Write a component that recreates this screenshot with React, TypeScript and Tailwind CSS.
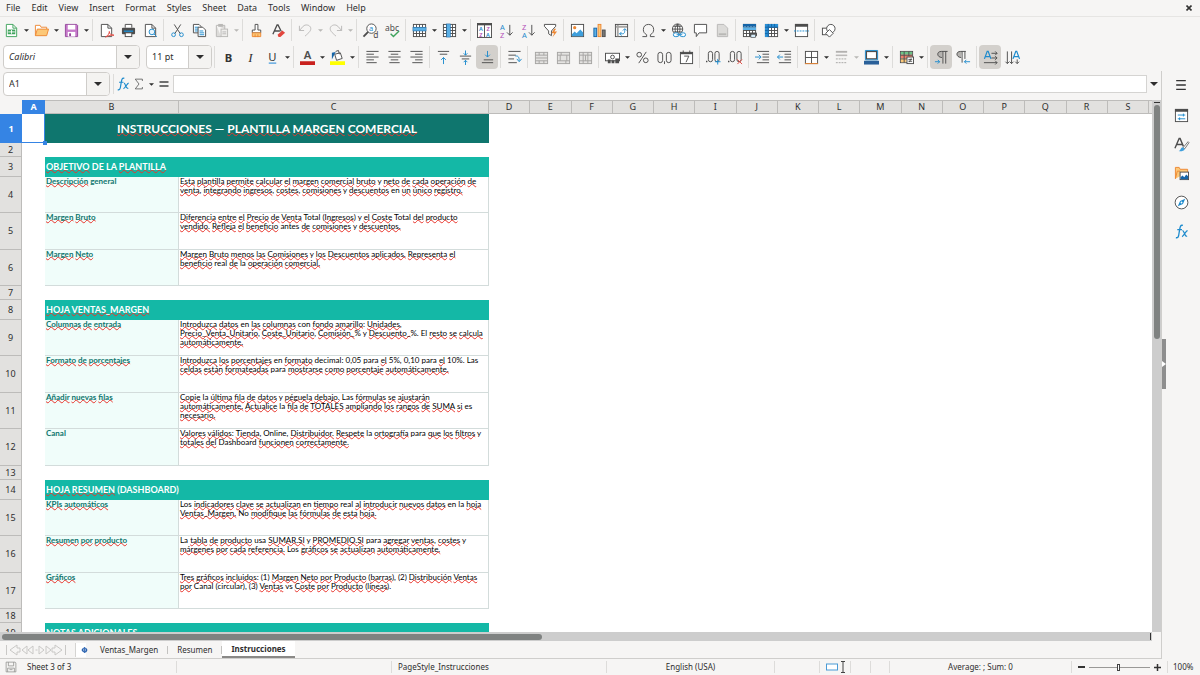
import React from 'react';

const INK = '#4d4d4d';
const BLUE = '#1e8bcd';
const ORANGE = '#ed8733';
const PURPLE = '#b34fb8';
const GREEN = '#3fa35c';
const GREY = '#b9b8b6';

/* ---------- icons (16x16 grid) ---------- */

const lines = (d: string, color = INK) => <path d={d} stroke={color} fill="none" />;

const grid = (
  <>
    <rect x="1.5" y="1.5" width="13" height="13" fill="#fff" stroke={INK} />
    {lines('M1.5 4.8h13M1.5 8h13M1.5 11.2h13M4.8 1.5v13M8 1.5v13M11.2 1.5v13')}
  </>
);

const mergeBox = (inner: string) => (
  <>
    <rect x="1.5" y="2.5" width="13" height="12" fill="#e4e3e1" stroke="#a5a4a2" />
    {lines(inner, '#a5a4a2')}
  </>
);

const icons: Record<string, React.ReactNode> = {
  new: (
    <>
      <path d="M2.5 1.5h7l4 4v9h-11z" fill="#fff" stroke={GREEN} />
      <path d="M9.5 1.5v4h4" fill="none" stroke={GREEN} />
      <rect x="4" y="7" width="8" height="5" fill={GREEN} />
      {lines('M4.5 9.5h7M8 7.5v4', '#fff')}
    </>
  ),
  open: (
    <>
      <path d="M1.5 13.5v-11h5l1 2h6v3" fill="#fff" stroke={ORANGE} />
      <path d="M1.5 13.5l2-7h12l-2 7z" fill="#fcc878" stroke={ORANGE} />
    </>
  ),
  save: (
    <>
      <path d="M1.5 1.5h12l1 1v12h-13z" fill="#c678ca" stroke="#93489b" />
      <rect x="4" y="2" width="8" height="5" fill="#fff" />
      <rect x="4" y="9.5" width="8" height="5" fill="#fff" />
      <rect x="5.5" y="11" width="2" height="3" fill="#93489b" />
    </>
  ),
  pdf: (
    <>
      <path d="M2.5 14.5v-13h7l4 4v9z" fill="#fff" stroke={INK} />
      {lines('M9.5 1.5v4h4')}
      <path d="M7 15c3-2 4-4 4-6 0 3 2 4 5 4-3-.5-6 .5-9 2z" fill="#fff" stroke="#e2463e" />
    </>
  ),
  print: (
    <>
      <path d="M4.5 5v-3.500h7v3.500" fill="#fff" stroke={INK} />
      <rect x="1" y="5" width="14" height="7" rx="1" fill={INK} />
      <rect x="3" y="8" width="10" height="1.500" fill={BLUE} />
      <rect x="4.500" y="10.500" width="7" height="4" fill="#fff" stroke={INK} />
    </>
  ),
  preview: (
    <>
      <path d="M2.5 14.5v-13h7l4 4v9z" fill="#fff" stroke={INK} />
      {lines('M9.5 1.5v4h4')}
      <circle cx="9.5" cy="9.5" r="3" fill="#eaf5fc" stroke={BLUE} />
      {lines('M11.800 11.800l3 3', BLUE)}
    </>
  ),
  cut: (
    <>
      {lines('M4.500 1.500l6.500 10M11.500 1.500L5 11.500')}
      <circle cx="3.800" cy="12.500" r="2" fill="none" stroke={BLUE} />
      <circle cx="12.200" cy="12.500" r="2" fill="none" stroke={BLUE} />
    </>
  ),
  copy: (
    <>
      <path d="M1.500 1.500h6l2 2v7h-8z" fill="#fff" stroke={INK} />
      {lines('M3 4.500h4M3 6.500h5M3 8.500h5', BLUE)}
      <path d="M6.500 4.500h5l3 3v7h-8z" fill="#fff" stroke={INK} />
      {lines('M8 8.500h4M8 10.500h5M8 12.500h5', BLUE)}
    </>
  ),
  paste: (
    <>
      <path d="M2.500 2.500h9v4M2.500 2.500v12h5" fill="#dcdbd9" stroke={GREY} />
      <rect x="4.500" y="1" width="5" height="3" fill={GREY} />
      <rect x="7.500" y="6.500" width="7" height="8" fill="#efeeec" stroke={GREY} />
      {lines('M9 9.500h4M9 11.500h4', GREY)}
    </>
  ),
  clone: (
    <>
      <path d="M6.500 1.500h3v6h3v3h-9v-3h3z" fill="#fff" stroke={INK} />
      <path d="M3.500 10.500h9v4h-9z" fill="#fcc878" stroke={ORANGE} />
      {lines('M6.500 12v3M9.500 12v3', ORANGE)}
    </>
  ),
  clear: (
    <>
      <path d="M2 12L6.500 2h1L11 9M3.500 8.500h6" fill="none" stroke={INK} strokeWidth="1.400" />
      <path d="M7 12.500l5-4.500 3 2.500-5 4.500h-2z" fill="#e2463e" />
    </>
  ),
  undo: lines('M1.500 3v5h5M1.500 8l4-4.500c2.500-2.500 7-1.500 8 1.500 .8 3-1.500 5-6 9', GREY),
  redo: lines('M14.500 3v5h-5M14.500 8l-4-4.500c-2.500-2.500-7-1.500-8 1.500-.8 3 1.500 5 6 9', GREY),
  find: (
    <>
      <circle cx="9" cy="6" r="5" fill="#fff" stroke={INK} />
      <path d="M5.500 9.500l-5 5" stroke={INK} strokeWidth="2" />
      <text x="6.500" y="8.500" fontSize="8" fill={BLUE}>a</text>
      <text x="11" y="15.500" fontSize="9" fill={INK}>d</text>
    </>
  ),
  spell: (
    <>
      <text x="0" y="8" fontSize="9" fill={INK}>abc</text>
      <path d="M6 11.500l3 3 6-6" fill="none" stroke={GREEN} strokeWidth="1.500" />
    </>
  ),
  row: (
    <>
      {grid}
      <rect x="1" y="4.500" width="14" height="4" fill="#5bb0e6" stroke="#1565a8" strokeWidth=".5" />
    </>
  ),
  column: (
    <>
      {grid}
      <rect x="5" y="1" width="4" height="14" fill="#5bb0e6" stroke="#1565a8" strokeWidth=".5" />
    </>
  ),
  sort: (
    <>
      <rect x=".5" y=".5" width="15" height="15" fill="#fff" stroke={INK} />
      <path d="M0 1.500h16" stroke={INK} strokeWidth="2" />
      {lines('M8 1v14')}
      <text x="2" y="8.500" fontSize="6" fontWeight="600" fill={BLUE}>A</text>
      <text x="2.500" y="14.500" fontSize="6" fontWeight="600" fill={PURPLE}>Z</text>
      <text x="10" y="8.500" fontSize="6" fontWeight="600" fill={PURPLE}>Z</text>
      <text x="9.500" y="14.500" fontSize="6" fontWeight="600" fill={BLUE}>A</text>
    </>
  ),
  sortAsc: (
    <>
      <text x="1" y="7" fontSize="8" fill={BLUE}>A</text>
      <text x="1" y="15.500" fontSize="8" fill={PURPLE}>Z</text>
      {lines('M11.500 2v11M8.500 10l3 3 3-3')}
    </>
  ),
  sortDesc: (
    <>
      <text x="1" y="7" fontSize="8" fill={PURPLE}>Z</text>
      <text x="1" y="15.500" fontSize="8" fill={BLUE}>A</text>
      {lines('M11.500 2v11M8.500 10l3 3 3-3')}
    </>
  ),
  filter: (
    <>
      <path d="M1.500 1.500h12v2l-4.500 5v5l-3-2v-3l-4.500-5z" fill="#fff" stroke={INK} />
      <path d="M12 6l-3 5h3l-2 4.500 5-6.500h-3l2-3z" fill={ORANGE} />
    </>
  ),
  image: (
    <>
      <rect x="1.500" y="1.500" width="13" height="13" fill="#fff" stroke={INK} />
      <circle cx="5" cy="5" r="1.700" fill={ORANGE} />
      <path d="M2 14v-2l3-3 2 2 4-4 3 3v4z" fill="#3f9fdc" />
    </>
  ),
  chart: (
    <>
      <rect x="2" y="5.500" width="3" height="9" fill="#5bb0e6" stroke="#1565a8" />
      <rect x="6.500" y="1.500" width="3" height="13" fill="#fcc878" stroke={ORANGE} />
      <rect x="11" y="7.500" width="3" height="7" fill="#797774" stroke={INK} />
    </>
  ),
  pivot: (
    <>
      <rect x="1.500" y="1.500" width="13" height="13" fill="#fff" stroke={INK} />
      <path d="M2 4h12M4 2v12" stroke="#a8a7a5" strokeWidth="2" />
      {lines('M6 11.500h3c2 0 2.500-1 2.500-5M8 9.500l-2 2 2 2M9.500 8l2-2 2 2', BLUE)}
    </>
  ),
  omega: (
    <path
      d="M1.500 14.500H6v-2C3.500 11 2.500 9.500 2.500 7c0-3.500 2.300-5.500 5.500-5.500s5.500 2 5.500 5.500c0 2.500-1 4-3.500 5.500v2h4.500"
      fill="none"
      stroke={INK}
    />
  ),
  link: (
    <>
      <circle cx="7" cy="6.500" r="5.500" fill="#fff" stroke={INK} />
      {lines('M1.500 6.500h11M7 1v11M2.500 3.500h9M2.500 9.500h9M7 1c-3.500 3-3.500 8 0 11M7 1c3.500 3 3.500 8 0 11')}
      <rect x="2.500" y="10.500" width="6" height="4" rx="2" fill="#fff" stroke={BLUE} />
      <rect x="9.500" y="10.500" width="6" height="4" rx="2" fill="#fff" stroke={BLUE} />
      {lines('M6 12.500h6', BLUE)}
    </>
  ),
  comment: <path d="M1.500 1.500h13v9h-8l-3 4v-4h-2z" fill="#fff" stroke={INK} />,
  footer: (
    <>
      <path d="M2.500 1.500h7l4 4v9h-11z" fill="#dcdbd9" stroke={GREY} />
      <rect x="4" y="11" width="8" height="2" fill={GREY} />
    </>
  ),
  printArea: (
    <>
      {grid}
      <path d="M1 1h14v3H1z" fill="#1565a8" />
      <path d="M1 4.500h14v3H1z" fill="#5bb0e6" />
      <rect x="8" y="10" width="8" height="4" rx="1" fill={INK} />
      <rect x="9.500" y="12" width="5" height="3.500" fill="#d5ecfa" stroke={INK} strokeWidth=".7" />
    </>
  ),
  freeze: (
    <>
      {grid}
      <path d="M1 1h14v3.500H5V15H1z" fill="#2a8fd4" />
      {lines('M4.500 1v14M1 4.500h14M8 1v3M11.200 1v3M1 8h3M1 11.200h3', '#1565a8')}
    </>
  ),
  split: (
    <>
      <rect x="1.500" y="1.500" width="13" height="13" fill="#fff" stroke={INK} />
      <path d="M1 2.500h14" stroke={INK} strokeWidth="3" />
      <path d="M0 8.500h16" stroke={BLUE} strokeDasharray="2 1" />
    </>
  ),
  shapes: (
    <>
      <rect x="1.500" y="5.500" width="7" height="7" fill="#fff" stroke={INK} />
      <circle cx="10.500" cy="6" r="4.500" fill="#fff" stroke={INK} />
      <path d="M9 7l4 4-4 4-4-4z" fill="#fff" stroke={INK} />
    </>
  ),
  bold: <text x="4" y="12.500" fontSize="12" fontWeight="700" fill="#333">B</text>,
  italic: (
    <text x="5.500" y="12.500" fontSize="14" fontStyle="italic" fill="#333" style={{ fontFamily: 'Liberation Serif, serif' }}>
      I
    </text>
  ),
  underline: (
    <>
      <text x="3.500" y="11.500" fontSize="12" fill="#333">U</text>
      <path d="M4 14h8" stroke="#5aa5e0" strokeWidth="1.500" />
    </>
  ),
  fontColor: (
    <>
      <text x="4" y="10" fontSize="12" fontWeight="600" fill={INK}>A</text>
      <rect x="0" y="12" width="16" height="4" fill="#c9211e" />
    </>
  ),
  fill: (
    <>
      <path d="M5 4.500l6-1.500 2 6-6 2z" fill="#fff" stroke={INK} />
      <path d="M6 1.500l3-1 1 4" fill="none" stroke={INK} />
      <path d="M2 10V3l4-1-1.500 3z" fill="#1565a8" />
      <rect x="0" y="12" width="16" height="4" fill="#ffff00" />
    </>
  ),
  alignLeft: lines('M1.500 1.500h13M1.500 4.500h8M1.500 7.500h13M1.500 10.500h8M1.500 13.500h11'),
  alignCenter: lines('M1.500 1.500h13M4 4.500h8M1.500 7.500h13M4 10.500h8M2.500 13.500h11'),
  alignRight: lines('M1.500 1.500h13M6.500 4.500h8M1.500 7.500h13M6.500 10.500h8M3.500 13.500h11'),
  alignTop: (
    <>
      {lines('M2 1.500h12M4 4.500h8')}
      {lines('M8 15V8M5.500 10.500L8 8l2.500 2.500', BLUE)}
    </>
  ),
  alignMiddle: (
    <>
      {lines('M2 6.500h12M4 9.500h8')}
      {lines('M8 .5v5M6 3.500l2 2 2-2M8 16v-5M6 13l2-2 2 2', BLUE)}
    </>
  ),
  alignBottom: (
    <>
      {lines('M4 10.500h10M2 13.500h12')}
      {lines('M8 1v6.500M5.500 5L8 7.500 10.500 5', BLUE)}
    </>
  ),
  wrap: (
    <>
      {lines('M1.500 1.500h13M1.500 5.500h8M1.500 9.500h6M1.500 13.500h9')}
      {lines('M9 6.500c3-.5 4 1 4 5M10.500 9.500l2.500 3 2.500-3', BLUE)}
    </>
  ),
  mergeAll: mergeBox('M1.500 5.500h13M1.500 11.500h13M5.500 2.500v3M10.500 2.500v3M5.500 11.500v3M10.500 11.500v3M1.500 8.500h13'),
  merge: mergeBox('M1.500 5.500h13M1.500 11.500h13M5.500 2.500v3M10.500 11.500v3M4.500 5.500v6M11.500 5.500v6'),
  unmerge: mergeBox('M1.500 5.500h13M1.500 11.500h13M5.500 2.500v12M10.500 2.500v12M8 5.500v6'),
  currency: (
    <>
      <rect x=".5" y="3.500" width="15" height="8" fill="#fff" stroke={INK} />
      <circle cx="8" cy="7.500" r="2" fill="none" stroke={INK} />
      <path d="M3 10h3v4H3zM7 11h3v3H7zM11 9h4v5h-4z" fill={INK} />
    </>
  ),
  percent: (
    <>
      <circle cx="4.500" cy="5" r="2.500" fill="none" stroke={INK} />
      <circle cx="11.500" cy="11" r="2.500" fill="none" stroke={INK} />
      {lines('M12 2L4 14')}
    </>
  ),
  number: (
    <>
      <rect x="1" y="2.500" width="5" height="11" rx="2.500" fill="none" stroke={INK} />
      <rect x="10" y="2.500" width="5" height="11" rx="2.500" fill="none" stroke={INK} />
      {lines('M8 12v3')}
    </>
  ),
  date: (
    <>
      <rect x="1.500" y="2.500" width="13" height="12" fill="#fff" stroke={INK} />
      <path d="M1.500 3.500h13" stroke={INK} strokeWidth="2" />
      {lines('M4.500 .5v3M11.500 .5v3M5.500 6.500h5l-3 6.500')}
    </>
  ),
  addDecimal: (
    <>
      <rect x="2.500" y="1.500" width="4.500" height="11" rx="2.200" fill="none" stroke={INK} />
      <rect x="9.500" y="1.500" width="4.500" height="11" rx="2.200" fill="none" stroke={INK} />
      <path d="M0 11.500h1.500v1.500H0z" fill={INK} />
      {lines('M12.500 9.500v6M9.500 12.500h6', BLUE)}
    </>
  ),
  delDecimal: (
    <>
      <rect x="2.500" y="1.500" width="4.500" height="11" rx="2.200" fill="none" stroke={INK} />
      <rect x="9.500" y="1.500" width="4.500" height="11" rx="2.200" fill="none" stroke={INK} />
      <path d="M0 11.500h1.500v1.500H0z" fill={INK} />
      {lines('M10 10l5 5M15 10l-5 5', '#e2463e')}
    </>
  ),
  indent: (
    <>
      {lines('M2 1.500h13M8 4.500h7M8 7.500h7M8 10.500h7M2 13.500h13')}
      {lines('M0 7.500h6M4 5l2.500 2.500L4 10', BLUE)}
    </>
  ),
  outdent: (
    <>
      {lines('M2 1.500h13M8 4.500h7M8 7.500h7M8 10.500h7M2 13.500h13')}
      {lines('M.5 7.500h6M3 5L.5 7.500 3 10', BLUE)}
    </>
  ),
  borders: (
    <>
      <rect x="1.500" y="1.500" width="13" height="13" fill="#fff" stroke={INK} />
      {lines('M8 1.500v13M1.500 8h13')}
      {lines('M1 14.500h14', ORANGE)}
    </>
  ),
  borderStyle: (
    <>
      {lines('M2 1.500h12M2 5.500h12', '#a5a4a2')}
      <path d="M2 2.500h12M2 6h12" stroke={GREY} />
      <path d="M2 9.500h12M2 13.500h12" stroke="#a5a4a2" strokeDasharray="2 1" />
    </>
  ),
  borderColor: (
    <>
      <rect x="2.500" y="1.500" width="11" height="8" fill="#fff" stroke={INK} strokeWidth="1.500" />
      <path d="M1.500 .5h13v10h-13z" fill="none" stroke={BLUE} />
      <rect x="0" y="11.500" width="16" height="4" fill="#2a6099" />
    </>
  ),
  conditional: (
    <>
      <rect x="1.500" y="1.500" width="13" height="12" fill="#fff" stroke={INK} />
      <path d="M2 2h12v3H2z" fill="#6cc487" />
      <path d="M2 5h12v4H2z" fill="#f0806c" />
      <path d="M2 9h6v4H2z" fill="#fcc878" />
      {lines('M1.500 5.500h13M1.500 9.500h7M5.500 1.500v12M10.500 1.500v5')}
      <rect x="8.500" y="7.500" width="7" height="7" fill="#fff" stroke={INK} />
      {lines('M10 10h4M10 12h4M13 9l-2 4')}
    </>
  ),
  ltr: (
    <>
      <path d="M9 1.500C5 1 4 3 4 4.500S5.500 8 8 8z" fill="#b4b2af" />
      {lines('M14.500 1.500H8C5 1.500 4 3 4 4.500S5.500 8 8.500 8M9.500 1.500v13M12.500 1.500v13')}
      {lines('M1 12.500h5M4 10.500l2 2-2 2', BLUE)}
    </>
  ),
  rtl: (
    <>
      <path d="M6 1.500C2 1 1 3 1 4.500S2.500 8 5 8z" fill="#b4b2af" />
      {lines('M10.500 1.500H5C2 1.500 1 3 1 4.500S2.500 8 5.500 8M6.500 1.500v12M9.500 1.500v8')}
      {lines('M9 12.500h6M11 10.500l-2 2 2 2', BLUE)}
    </>
  ),
  textLtr: (
    <>
      <path d="M1.500 9.500l3-8h1l3 8M2.500 7h5" fill="none" stroke={BLUE} strokeWidth="1.300" />
      {lines('M9 3.500h6M13 1.500l2 2-2 2M9 8.500h6M13 6.500l2 2-2 2M1 13.500h14M13 11.500l2 2-2 2')}
    </>
  ),
  textTtb: (
    <>
      <path d="M8.500 9.500l3-8h1l3 8M9.500 7h5" fill="none" stroke={BLUE} strokeWidth="1.300" />
      {lines('M2.500 1.500v13M.5 12.500l2 2 2-2M7 1.500v13M5 12.500l2 2 2-2M13 10v4.500M11 12.500l2 2 2-2')}
    </>
  ),
  properties: (
    <>
      <rect x="1.500" y="1.500" width="13" height="13" fill="#fff" stroke={INK} />
      <path d="M1 2.500h14" stroke={INK} strokeWidth="3" />
      {lines('M4 7.500h8M10 6v3M4 11.500h8M6 10v3', BLUE)}
    </>
  ),
  styles: (
    <>
      <path d="M1 12L5.500 1.500h1L10 10M2.500 8h7" fill="none" stroke={INK} strokeWidth="1.500" />
      <path d="M15 5l-5 6 1.500 1.500L16 6z" fill="#fff" stroke={INK} strokeWidth=".8" />
      <path d="M5 15c2 0 2-4 4.500-4l2 2c-1 2-4 2.500-6.500 2z" fill="#3f9fdc" />
    </>
  ),
  gallery: (
    <>
      <path d="M1.500 13.500v-12h4l1 2h8v3" fill="#fcc878" stroke={ORANGE} />
      {lines('M1.500 13.500l2-8h3', ORANGE)}
      <rect x="6.500" y="6.500" width="9" height="8" fill="#fff" stroke={INK} />
      <path d="M7 14v-2l2-2 2 2 2-3 2 2v3z" fill="#1565a8" />
    </>
  ),
  navigator: (
    <>
      <circle cx="8" cy="8" r="6.800" fill="#fff" stroke={INK} />
      <path d="M12 4l-2.500 5.500L4 12l2.500-5.500z" fill={BLUE} />
      <circle cx="8" cy="8" r="1" fill="#fff" />
    </>
  ),
  functions: (
    <>
      <path d="M9.500 1.500C7 .5 6.500 3 6 6l-1 6c-.5 2.500-1.500 3-3 2.500M3.500 6h5" fill="none" stroke={BLUE} strokeWidth="1.400" />
      <path d="M9 7c2-.5 2 7 5 6M14.500 7c-2 0-4 6-6 6.500" fill="none" stroke={BLUE} strokeWidth="1.300" />
    </>
  ),
  menu: <path d="M2.500 3h11M2.500 8h11M2.500 13h11" stroke="#333" strokeWidth="1.500" />,
  sum: lines('M12.500 4V1.500H3L8 8l-5 6.500h9.500V12'),
  equals: <path d="M3.500 6h9M3.500 10h9" stroke="#444" strokeWidth="1.500" />,
  disk: (
    <>
      <path d="M1.500 1.500h12l1 1v12h-13z" fill="none" stroke="#8e8d8b" />
      {lines('M4.500 1.500v5h7v-5M3.500 14.500v-5h9v5M6 11.500h4', '#8e8d8b')}
    </>
  ),
};

const Icon: React.FC<{ name: string; className?: string }> = ({ name, className = 'size-4' }) => (
  <svg viewBox="0 0 16 16" className={`${className} flex-shrink-0 overflow-visible`} aria-hidden="true">
    {icons[name]}
  </svg>
);

const Caret: React.FC<{ big?: boolean; muted?: boolean }> = ({ big, muted }) => (
  <svg viewBox="0 0 8 4" className={big ? 'h-1 w-2' : 'h-[3px] w-[5px]'} aria-hidden="true">
    <path d="M0 0h8L4 4z" fill={muted ? '#b9b8b6' : '#2e2e2e'} />
  </svg>
);

/* ---------- toolbars ---------- */

interface Tool {
  icon: string;
  label: string;
  menu?: boolean;
  active?: boolean;
  disabled?: boolean;
}

const standardGroups: Tool[][] = [
  [
    { icon: 'new', label: 'New', menu: true },
    { icon: 'open', label: 'Open', menu: true },
    { icon: 'save', label: 'Save', menu: true },
  ],
  [
    { icon: 'pdf', label: 'Export as PDF' },
    { icon: 'print', label: 'Print' },
    { icon: 'preview', label: 'Print preview' },
  ],
  [
    { icon: 'cut', label: 'Cut' },
    { icon: 'copy', label: 'Copy' },
    { icon: 'paste', label: 'Paste', menu: true, disabled: true },
  ],
  [
    { icon: 'clone', label: 'Clone formatting' },
    { icon: 'clear', label: 'Clear formatting' },
  ],
  [
    { icon: 'undo', label: 'Undo', menu: true, disabled: true },
    { icon: 'redo', label: 'Redo', menu: true, disabled: true },
  ],
  [
    { icon: 'find', label: 'Find and replace' },
    { icon: 'spell', label: 'Spelling' },
  ],
  [
    { icon: 'row', label: 'Row', menu: true },
    { icon: 'column', label: 'Column', menu: true },
  ],
  [
    { icon: 'sort', label: 'Sort' },
    { icon: 'sortAsc', label: 'Sort ascending' },
    { icon: 'sortDesc', label: 'Sort descending' },
    { icon: 'filter', label: 'AutoFilter' },
  ],
  [
    { icon: 'image', label: 'Insert image' },
    { icon: 'chart', label: 'Insert chart' },
    { icon: 'pivot', label: 'Insert pivot table' },
  ],
  [
    { icon: 'omega', label: 'Special character', menu: true },
    { icon: 'link', label: 'Hyperlink' },
    { icon: 'comment', label: 'Comment' },
    { icon: 'footer', label: 'Headers and footers', disabled: true },
  ],
  [
    { icon: 'printArea', label: 'Define print area' },
    { icon: 'freeze', label: 'Freeze rows and columns', menu: true },
    { icon: 'split', label: 'Split window' },
  ],
  [{ icon: 'shapes', label: 'Draw functions' }],
];

const formatGroups: Tool[][] = [
  [
    { icon: 'bold', label: 'Bold' },
    { icon: 'italic', label: 'Italic' },
    { icon: 'underline', label: 'Underline', menu: true },
  ],
  [
    { icon: 'fontColor', label: 'Font color', menu: true },
    { icon: 'fill', label: 'Background color', menu: true },
  ],
  [
    { icon: 'alignLeft', label: 'Align left' },
    { icon: 'alignCenter', label: 'Center horizontally' },
    { icon: 'alignRight', label: 'Align right' },
  ],
  [
    { icon: 'alignTop', label: 'Align top' },
    { icon: 'alignMiddle', label: 'Center vertically' },
    { icon: 'alignBottom', label: 'Align bottom', active: true },
  ],
  [{ icon: 'wrap', label: 'Wrap text' }],
  [
    { icon: 'mergeAll', label: 'Merge and center', disabled: true },
    { icon: 'merge', label: 'Merge cells', disabled: true },
    { icon: 'unmerge', label: 'Unmerge cells', disabled: true },
  ],
  [
    { icon: 'currency', label: 'Format as currency', menu: true },
    { icon: 'percent', label: 'Format as percent' },
    { icon: 'number', label: 'Format as number' },
    { icon: 'date', label: 'Format as date' },
  ],
  [
    { icon: 'addDecimal', label: 'Add decimal place' },
    { icon: 'delDecimal', label: 'Delete decimal place' },
  ],
  [
    { icon: 'indent', label: 'Increase indent' },
    { icon: 'outdent', label: 'Decrease indent' },
  ],
  [
    { icon: 'borders', label: 'Borders', menu: true },
    { icon: 'borderStyle', label: 'Border style', menu: true, disabled: true },
    { icon: 'borderColor', label: 'Border color', menu: true },
  ],
  [{ icon: 'conditional', label: 'Conditional formatting', menu: true }],
  [
    { icon: 'ltr', label: 'Left-to-right', active: true },
    { icon: 'rtl', label: 'Right-to-left' },
  ],
  [
    { icon: 'textLtr', label: 'Text direction left to right', active: true },
    { icon: 'textTtb', label: 'Text direction top to bottom' },
  ],
];

const Separator = () => <div className="mx-0.5 h-[22px] w-px flex-shrink-0 bg-[#dddcda]" />;

const ToolGroups: React.FC<{ groups: Tool[][] }> = ({ groups }) => (
  <>
    {groups.map((group, i) => (
      <React.Fragment key={i}>
        {i > 0 && <Separator />}
        {group.map((tool) => (
          <div key={tool.icon} className="flex flex-shrink-0 items-center">
            <button
              type="button"
              aria-label={tool.label}
              aria-pressed={tool.active}
              disabled={tool.disabled}
              className={`flex h-6 w-[22px] items-center justify-center rounded ${tool.active ? 'bg-[#d3d0cc]' : ''}`}
            >
              <Icon name={tool.icon} className="size-[15px]" />
            </button>
            {tool.menu && (
              <button
                type="button"
                aria-label={`${tool.label} options`}
                disabled={tool.disabled}
                className="flex h-6 w-2 items-center justify-center"
              >
                <Caret muted={tool.disabled} />
              </button>
            )}
          </div>
        ))}
      </React.Fragment>
    ))}
  </>
);

interface ComboProps {
  label: string;
  value: string;
  className: string;
  textClass?: string;
}

const Combo: React.FC<ComboProps> = ({ label, value, className, textClass = '' }) => (
  <div className={`relative flex h-6 flex-shrink-0 overflow-hidden rounded border border-[#cfcdca] bg-white ${className}`}>
    <select aria-label={label} defaultValue={value} className={`w-full appearance-none bg-transparent pl-[5px] outline-none ${textClass}`}>
      <option>{value}</option>
    </select>
    <div className="pointer-events-none absolute inset-y-0 right-0 flex w-[23px] items-center justify-center border-l border-[#cfcdca] bg-[#f4f3f1]">
      <Caret big />
    </div>
  </div>
);

/* ---------- sheet ---------- */

type Row =
  | { kind: 'blank' }
  | { kind: 'title'; text: string }
  | { kind: 'section'; text: string }
  | { kind: 'item'; label: string; text: string; tall?: boolean };

const rows: Row[] = [
  { kind: 'title', text: 'INSTRUCCIONES — PLANTILLA MARGEN COMERCIAL' },
  { kind: 'blank' },
  { kind: 'section', text: 'OBJETIVO DE LA PLANTILLA' },
  {
    kind: 'item',
    label: 'Descripción general',
    text: 'Esta plantilla permite calcular el margen comercial bruto y neto de cada operación de\nventa, integrando ingresos, costes, comisiones y descuentos en un único registro.',
  },
  {
    kind: 'item',
    label: 'Margen Bruto',
    text: 'Diferencia entre el Precio de Venta Total (Ingresos) y el Coste Total del producto\nvendido. Refleja el beneficio antes de comisiones y descuentos.',
    tall: true,
  },
  {
    kind: 'item',
    label: 'Margen Neto',
    text: 'Margen Bruto menos las Comisiones y los Descuentos aplicados. Representa el\nbeneficio real de la operación comercial.',
  },
  { kind: 'blank' },
  { kind: 'section', text: 'HOJA VENTAS_MARGEN' },
  {
    kind: 'item',
    label: 'Columnas de entrada',
    text: 'Introduzca datos en las columnas con fondo amarillo: Unidades,\nPrecio_Venta_Unitario, Coste_Unitario, Comisión_% y Descuento_%. El resto se calcula\nautomáticamente.',
  },
  {
    kind: 'item',
    label: 'Formato de porcentajes',
    text: 'Introduzca los porcentajes en formato decimal: 0,05 para el 5%, 0,10 para el 10%. Las\nceldas están formateadas para mostrarse como porcentaje automáticamente.',
    tall: true,
  },
  {
    kind: 'item',
    label: 'Añadir nuevas filas',
    text: 'Copie la última fila de datos y péguela debajo. Las fórmulas se ajustarán\nautomáticamente. Actualice la fila de TOTALES ampliando los rangos de SUMA si es\nnecesario.',
  },
  {
    kind: 'item',
    label: 'Canal',
    text: 'Valores válidos: Tienda, Online, Distribuidor. Respete la ortografía para que los filtros y\ntotales del Dashboard funcionen correctamente.',
    tall: true,
  },
  { kind: 'blank' },
  { kind: 'section', text: 'HOJA RESUMEN (DASHBOARD)' },
  {
    kind: 'item',
    label: 'KPIs automáticos',
    text: 'Los indicadores clave se actualizan en tiempo real al introducir nuevos datos en la hoja\nVentas_Margen. No modifique las fórmulas de esta hoja.',
  },
  {
    kind: 'item',
    label: 'Resumen por producto',
    text: 'La tabla de producto usa SUMAR.SI y PROMEDIO.SI para agregar ventas, costes y\nmárgenes por cada referencia. Los gráficos se actualizan automáticamente.',
    tall: true,
  },
  {
    kind: 'item',
    label: 'Gráficos',
    text: 'Tres gráficos incluidos: (1) Margen Neto por Producto (barras), (2) Distribución Ventas\npor Canal (circular), (3) Ventas vs Coste por Producto (líneas).',
  },
  { kind: 'blank' },
  { kind: 'section', text: 'NOTAS ADICIONALES' },
];

const columns = ['D', 'E', 'F', 'G', 'H', 'I', 'J', 'K', 'L', 'M', 'N', 'O', 'P', 'Q', 'R', 'S'];

// words the English dictionary accepts
const known = new Set(
  'DE LA La Los Las El No y en con la para real antes decimal general usa es vs Total Online Dashboard DASHBOARD Canal circular'.split(' '),
);

const SpellChecked: React.FC<{ text: string }> = ({ text }) => (
  <>
    {text.split(/([\p{L}_.]*\p{L}[\p{L}_.]*)/u).map((part, i) => {
      if (i % 2 === 0 || known.has(part.replace(/\.$/, ''))) return part;
      return (
        <span key={i} className="underline decoration-[#e8352c] decoration-wavy decoration-1 [text-decoration-skip-ink:none] [text-underline-offset:-1px]">
          {part}
        </span>
      );
    })}
  </>
);

const rowHeight = (row: Row) => {
  if (row.kind === 'title') return 'h-[29px]';
  if (row.kind === 'blank') return 'h-[14px]';
  if (row.kind === 'section') return 'h-5';
  return row.tall ? 'h-[37px]' : 'h-9';
};

const RowCells: React.FC<{ row: Row }> = ({ row }) => {
  switch (row.kind) {
    case 'title':
      return (
        <td colSpan={2} className="bg-[#0f766e] text-center font-[Lato,sans-serif] text-xs font-bold whitespace-nowrap text-white">
          <SpellChecked text={row.text} />
        </td>
      );
    case 'section':
      return (
        <td colSpan={2} className="bg-[#14b8a6] pl-px font-[Lato,sans-serif] text-[9px] leading-3 font-bold whitespace-nowrap text-white">
          <SpellChecked text={row.text} />
        </td>
      );
    case 'item':
      return (
        <>
          <td className="border-r border-b border-[#d3dcdb] bg-[#f0fdfa] pl-px align-top font-[Lato,sans-serif] text-[8px] leading-[9px] font-bold whitespace-nowrap text-[#0f766e]">
            <SpellChecked text={row.label} />
          </td>
          <td className="border-r border-b border-[#d3dcdb] pl-px align-top font-[Lato,sans-serif] text-[8px] leading-[9px] whitespace-pre text-black">
            <SpellChecked text={row.text} />
          </td>
        </>
      );
    default:
      return <td colSpan={2} />;
  }
};

const headCell = 'border-r border-b border-[#bdbcba] bg-[#e2e1df] text-center font-normal leading-3';

const Sheet = () => (
  <table className="w-full table-fixed border-separate border-spacing-0 bg-white">
    <colgroup>
      <col className="w-[22px]" />
      <col className="w-[23px]" />
      <col className="w-[134px]" />
      <col className="w-[310px]" />
      {columns.map((c) => (
        <col key={c} />
      ))}
      <col className="w-[3px]" />
    </colgroup>
    <thead>
      <tr className="h-[14px]">
        <td className="bg-[#f6f5f4]" />
        <th className="bg-[#3584e4] text-center leading-3 font-bold text-white">A</th>
        <th className={`border-t ${headCell}`}>B</th>
        <th className={`border-t ${headCell}`}>C</th>
        {columns.map((c) => (
          <th key={c} className={`border-t ${headCell}`}>
            {c}
          </th>
        ))}
        <td className="border-t border-b border-[#bdbcba] bg-[#e2e1df]" />
      </tr>
    </thead>
    <tbody>
      {rows.map((row, i) => (
        <tr key={i} className={rowHeight(row)}>
          <th className={i === 0 ? 'bg-[#3584e4] text-center leading-3 font-bold text-white' : headCell}>{i + 1}</th>
          <td className="relative">
            {i === 0 && (
              <>
                <div className="absolute inset-0 border-r border-b border-[#3584e4]" />
                <div className="absolute -right-0.5 -bottom-0.5 z-10 size-1 bg-[#3584e4]" />
              </>
            )}
          </td>
          <RowCells row={row} />
          <td colSpan={17} />
        </tr>
      ))}
    </tbody>
  </table>
);

/* ---------- window ---------- */

const menus = ['File', 'Edit', 'View', 'Insert', 'Format', 'Styles', 'Sheet', 'Data', 'Tools', 'Window', 'Help'];

const MenuBar = () => (
  <nav className="flex h-4 flex-shrink-0 items-center pl-1.5">
    {menus.map((m) => (
      <button key={m} type="button" className="mr-[11px]">
        {m}
      </button>
    ))}
    <button type="button" aria-label="Close" className="mr-2 ml-auto">
      <svg viewBox="0 0 6 6" className="size-[6px]" aria-hidden="true">
        <path d="M.5 .5l5 5M5.500 .5l-5 5" stroke="#333" strokeWidth="1.600" />
      </svg>
    </button>
  </nav>
);

const FormulaBar = () => (
  <div className="flex h-[29px] flex-shrink-0 items-start pt-px pl-[3px]">
    <Combo label="Name box" value="A1" className="w-[107px]" />
    <div className="flex h-6 flex-1 items-center">
      <div className="mr-px ml-[3px] h-5 w-px bg-[#dddcda]" />
      <button type="button" aria-label="Function wizard" className="flex w-4 justify-center">
        <Icon name="functions" className="size-3.5" />
      </button>
      <button type="button" aria-label="Select function" className="flex w-4 justify-center">
        <Icon name="sum" className="size-3" />
      </button>
      <button type="button" aria-label="Select function options" className="flex w-2 justify-center">
        <Caret />
      </button>
      <button type="button" aria-label="Formula" className="flex w-[18px] justify-center">
        <Icon name="equals" className="size-4" />
      </button>
      <input aria-label="Input line" className="h-[18px] min-w-0 flex-1 border border-[#d5d4d2] bg-white px-1 outline-none" />
      <button type="button" aria-label="Expand formula bar" className="flex w-[14px] justify-center">
        <Caret big />
      </button>
    </div>
  </div>
);

const SideBar = () => (
  <aside className="relative flex w-[39px] flex-shrink-0 flex-col items-center border-l border-[#cfcecc] pt-[5px]">
    <button type="button" aria-label="Sidebar settings" className="mb-2 flex h-[17px] items-center">
      <Icon name="menu" className="size-3.5" />
    </button>
    {['properties', 'styles', 'gallery', 'navigator', 'functions'].map((name) => (
      <button key={name} type="button" aria-label={name} className="flex h-[29px] items-center">
        <Icon name={name} className="size-[15px]" />
      </button>
    ))}
    <button
      type="button"
      aria-label="Hide sidebar"
      className="absolute top-[268px] left-0 flex h-[50px] w-1 items-center justify-center bg-[#8e8e8e]"
    >
      <svg viewBox="0 0 4 6" className="h-[6px] w-1" aria-hidden="true">
        <path d="M0 0l4 3-4 3z" fill="#fff" />
      </svg>
    </button>
  </aside>
);

const SheetTabs = () => (
  <div className="flex h-[18px] flex-shrink-0 items-stretch border-b border-[#cfcecc] text-[8px]">
    <svg viewBox="0 0 62 14" className="ml-[5px] h-[14px] w-[62px] self-center" aria-hidden="true">
      <path
        d="M1.500 2v10M12 2L5 7l7 5V9h3V5h-3zM17 7l5-4v8zM23 7l5-4v8zM30.500 7h2M39 7l-5-4v8zM46 7l-5-4v8zM50 2l7 5-7 5V9h-3V5h3zM60.500 2v10"
        fill="none"
        stroke="#c9c8c6"
      />
    </svg>
    <button type="button" aria-label="Add sheet" className="ml-2 flex w-4 items-center">
      <svg viewBox="0 0 16 14" className="h-[14px] w-4" aria-hidden="true">
        <path d="M1 0h10v14H1z" fill="#fff" />
        <path d="M.5 0v14" stroke="#d5d4d2" />
        <circle cx="9.500" cy="7" r="2" fill="#fff" stroke="#2a62b0" strokeWidth="1.200" />
        <path d="M9.500 4v6M6.500 7h6" stroke="#2a62b0" strokeWidth=".8" />
      </svg>
    </button>
    <button type="button" className="px-[9px]">
      Ventas_Margen
    </button>
    <div className="h-2 w-px self-center bg-[#c3c2c0]" />
    <button type="button" className="px-[9px]">
      Resumen
    </button>
    <div className="h-2 w-px self-center bg-[#c3c2c0]" />
    <button type="button" className="border-b-2 border-[#8a8987] bg-white px-[9px] font-bold">
      Instrucciones
    </button>
  </div>
);

const statusCell = 'flex items-center border-l border-[#dddcda] h-3 whitespace-nowrap';

const StatusBar = () => (
  <footer className="grid h-4 flex-shrink-0 grid-cols-[22px_154fr_215fr_215fr_168fr_45px_31px_20px_19px_182fr_96px_33px] items-center text-[8px]">
    <Icon name="disk" className="mx-auto size-3" />
    <span className="pl-[5px]">Sheet 3 of 3</span>
    <span className={statusCell} />
    <span className={`${statusCell} pl-1.5`}>PageStyle_Instrucciones</span>
    <span className={`${statusCell} justify-center`}>English (USA)</span>
    <span className={statusCell} />
    <span className={`${statusCell} pl-1.5`}>
      <svg viewBox="0 0 20 12" className="h-3 w-5" aria-hidden="true">
        <rect x=".5" y="3" width="11" height="6" fill="#fff" stroke="#4a9bd6" />
        <path d="M15 .5h4M15 11.500h4M17 .5v11" fill="none" stroke="#444" />
      </svg>
    </span>
    <span className={statusCell} />
    <span className={statusCell} />
    <span className={`${statusCell} justify-center`}>Average: ; Sum: 0</span>
    <span className={`${statusCell} gap-1 px-1.5`}>
      <button type="button" aria-label="Zoom out" className="h-0.5 w-[7px] flex-shrink-0 bg-[#333]" />
      <input
        type="range"
        aria-label="Zoom"
        defaultValue={48}
        className="h-2 w-full min-w-0 appearance-none bg-[linear-gradient(#9a9997,#9a9997)] bg-[length:100%_1px] bg-center bg-no-repeat [&::-webkit-slider-thumb]:h-[7px] [&::-webkit-slider-thumb]:w-[3px] [&::-webkit-slider-thumb]:appearance-none [&::-webkit-slider-thumb]:border [&::-webkit-slider-thumb]:border-[#444] [&::-webkit-slider-thumb]:bg-white"
      />
      <button type="button" aria-label="Zoom in" className="flex size-[7px] flex-shrink-0">
        <svg viewBox="0 0 7 7" aria-hidden="true">
          <path d="M3.500 0v7M0 3.500h7" stroke="#333" strokeWidth="1.500" />
        </svg>
      </button>
    </span>
    <span className={`${statusCell} pl-[5px]`}>100%</span>
  </footer>
);

export default function App() {
  return (
    <div className="flex h-screen flex-col overflow-hidden bg-[#f6f5f4] font-['Noto_Sans',sans-serif] text-[9px] leading-4 text-[#2e2e2e]">
      <MenuBar />
      <div className="flex h-[27px] flex-shrink-0 items-center border-t border-[#e6e5e3]">
        <ToolGroups groups={standardGroups} />
      </div>
      <div className="flex h-7 flex-shrink-0 items-center pl-[3px]">
        <Combo label="Font name" value="Calibri" className="mr-1.5 w-[137px]" textClass="text-[9px] italic" />
        <Combo label="Font size" value="11 pt" className="w-[66px]" />
        <Separator />
        <ToolGroups groups={formatGroups} />
      </div>
      <div className="flex min-h-0 flex-1">
        <main className="flex min-w-0 flex-1 flex-col">
          <FormulaBar />
          <div className="flex min-h-0 flex-1">
            <div className="min-w-0 flex-1 overflow-hidden bg-white">
              <Sheet />
            </div>
            <div className="w-[9px] flex-shrink-0 bg-[#cdcdcd] px-px">
              <div className="mx-auto mt-0.5 h-px w-[6px] bg-[#333]" />
              <div className="mx-auto mt-0.5 h-[44%] w-[6px] rounded-full bg-[#7f8281]" />
            </div>
          </div>
          <div className="mr-[9px] flex h-[9px] flex-shrink-0 items-center justify-between bg-[#cdcdcd] pr-px pl-0.5">
            <div className="h-[6px] w-[47%] rounded-full bg-[#7f8281]" />
            <div className="h-[7px] w-px bg-[#333]" />
          </div>
          <SheetTabs />
        </main>
        <SideBar />
      </div>
      <StatusBar />
    </div>
  );
}
